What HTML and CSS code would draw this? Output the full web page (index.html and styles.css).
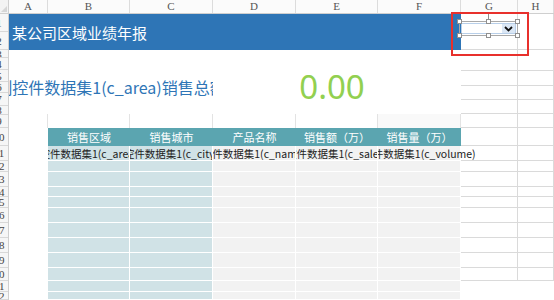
FILE: index.html
```html
<!DOCTYPE html>
<html lang="zh-CN">
<head>
    <meta charset="UTF-8">
    <meta name="viewport" content="width=device-width, initial-scale=1.0">
    <title>某公司区域业绩年报</title>
    <link rel="stylesheet" href="styles.css">
</head>
<body>
    <div class="sheet">
        <div class="colhead">
            <div class="corner"></div>
            <div class="col">A</div>
            <div class="col">B</div>
            <div class="col">C</div>
            <div class="col">D</div>
            <div class="col">E</div>
            <div class="col">F</div>
            <div class="col">G</div>
            <div class="col">H</div>
        </div>

        <div class="body">
            <div class="rowhead" id="rowhead"></div>

            <div class="grid" id="grid">
                <!-- 标题行 -->
                <div class="cell title">某公司区域业绩年报</div>
                <div class="cell"></div>
                <div class="cell"></div>

                <!-- 销售总额 -->
                <div class="cell label"><span>列控件数据集1(c_area)销售总额</span></div>
                <div class="cell total">0.00</div>
                <div class="cell"></div>
                <div class="cell"></div>
                <div class="cell"></div>
                <div class="cell"></div>
                <div class="cell"></div>
                <div class="cell"></div>
                <div class="cell"></div>
                <div class="cell"></div>

                <div class="cell gap"></div>
                <div class="cell gap"></div>
                <div class="cell gap"></div>
                <div class="cell gap"></div>
                <div class="cell gap"></div>
                <div class="cell gap shade"></div>
                <div class="cell"></div>
                <div class="cell"></div>

                <!-- 表头 -->
                <div class="cell blank"></div>
                <div class="cell th">销售区域</div>
                <div class="cell th">销售城市</div>
                <div class="cell th">产品名称</div>
                <div class="cell th">销售额（万）</div>
                <div class="cell th">销售量（万）</div>
                <div class="cell"></div>
                <div class="cell"></div>
            </div>
        </div>

        <!-- 下拉框控件 -->
        <div class="select-box"></div>
        <div class="combo">
            <span class="stem"></span>
            <span class="handle tl"></span>
            <span class="handle tm"></span>
            <span class="handle tr"></span>
            <span class="handle bl"></span>
            <span class="handle bm"></span>
            <span class="handle br"></span>
            <div class="combo-field">
                <div class="combo-btn">
                    <svg width="9" height="6" viewBox="0 0 9 6"><polyline points="1,1 4.5,4.5 8,1" fill="none" stroke="#111" stroke-width="1.8"/></svg>
                </div>
            </div>
        </div>
    </div>

    <script>
        const grid = document.getElementById('grid');
        const rowhead = document.getElementById('rowhead');

        // 数据行：每行的高度由 grid-template-rows 决定
        const fields = ['c_area', 'c_city', 'c_name', 'c_sales', 'c_volume'];
        const dataRows = 12;

        for (let r = 0; r < dataRows; r++) {
            grid.insertAdjacentHTML('beforeend', '<div class="cell blank"></div>');
            fields.forEach((f, i) => {
                let cls = i < 2 ? 'cell data blue' : 'cell data grey';
                let text = '';
                if (r === 0) {
                    text = '<span>控件数据集1(' + f + ')</span>';
                    if (i === 4) cls += ' spill';
                }
                grid.insertAdjacentHTML('beforeend', '<div class="' + cls + '">' + text + '</div>');
            });
            // G、H 两列
            let side = r >= 10 ? 'cell blank' : 'cell';
            if (r === 0) side += ' clear';
            grid.insertAdjacentHTML('beforeend', '<div class="' + side + '"></div><div class="' + side + '"></div>');
        }

        // 行号（只露出右边一小截）
        const heights = [18, 18, 8, 12, 12, 11, 13, 9, 13, 18, 15, 11, 15, 10, 11, 15, 15, 15, 15, 13, 11, 8];
        heights.forEach((h, i) => {
            rowhead.insertAdjacentHTML('beforeend',
                '<div class="rownum" style="height:' + h + 'px"><span>' + (i + 1) + '</span></div>');
        });
    </script>
</body>
</html>
```

FILE: styles.css
```css
* {
    box-sizing: border-box;
    margin: 0;
    padding: 0;
}

body {
    font-family: "Noto Sans CJK SC", "Noto Sans", sans-serif;
    background-color: #ffffff;
    width: 554px;
    height: 300px;
    overflow: hidden;
}

.sheet {
    position: relative;
    width: 554px;
    height: 300px;
}

/* 列标 */
.colhead {
    display: grid;
    grid-template-columns: 9px 39px 82px 83px 83px 82px 83px 57px 36px;
    height: 14px;
    border-bottom: 1px solid #cfcfcf;
    background: #fbfbfb;
}

.colhead .col {
    font-family: "Liberation Serif", serif;
    font-size: 11px;
    line-height: 13px;
    color: #555;
    text-align: center;
    border-right: 1px solid #dcdcdc;
}

.corner {
    position: relative;
    border-right: 1px solid #cfcfcf;
    background: #f3f3f3;
}

.corner::after {
    content: "";
    position: absolute;
    right: 1px;
    bottom: 1px;
    border-left: 6px solid transparent;
    border-bottom: 6px solid #d6d6d6;
}

.body {
    display: flex;
}

/* 行号 */
.rowhead {
    width: 9px;
    flex-shrink: 0;
    overflow: hidden;
    background: #f6f6f6;
    border-right: 1px solid #cfcfcf;
}

.rownum {
    border-bottom: 1px solid #d8d8d8;
    overflow: hidden;
    display: flex;
    align-items: center;
}

.rownum span {
    flex-shrink: 0;
    width: 26px;
    margin-left: -14px;
    text-align: center;
    font-family: "Liberation Serif", serif;
    font-size: 11px;
    color: #444;
}

/* 表格主体 */
.grid {
    display: grid;
    grid-template-columns: 39px 82px 83px 83px 82px 83px 57px 36px;
    grid-template-rows: 36px 21px 15px 14px 14px 14px 18px 15px 11px 15px 10px 11px 15px 15px 15px 15px 13px 11px 8px;
}

.cell {
    border-right: 1px solid #dadada;
    border-bottom: 1px solid #dadada;
    background: #ffffff;
    min-width: 0;
}

.cell.blank {
    border: none;
}

.cell.clear {
    background: none;
}

.title {
    grid-column: span 6;
    background: #2e75b6;
    border: none;
    color: #ffffff;
    font-size: 15px;
    display: flex;
    align-items: center;
    padding-left: 3px;
}

.label, .total {
    grid-column: span 3;
    grid-row: span 4;
    border: none;
    display: flex;
    justify-content: center;
    align-items: center;
    overflow: hidden;
    white-space: nowrap;
    padding-top: 10px;
}

.label {
    font-size: 16px;
    color: #2e75b6;
}

.label span {
    flex-shrink: 0;
}

.total {
    font-family: "Noto Sans", sans-serif;
    font-size: 33px;
    color: #92d050;
    padding-top: 8px;
    padding-right: 10px;
}

.gap {
    border-bottom: none;
    border-right-color: #e3e3e3;
}

.gap.shade {
    background: #f9f9f9;
}

.th {
    background: #5ba5b0;
    border: none;
    color: #ffffff;
    font-size: 11px;
    display: flex;
    align-items: center;
    justify-content: center;
}

.data {
    border-right: 1px solid #ffffff;
    border-bottom: 1px solid #ffffff;
    font-size: 10.5px;
    color: #222;
    display: flex;
    justify-content: center;
    align-items: center;
    overflow: hidden;
    white-space: nowrap;
}

.data span {
    flex-shrink: 0;
}

.data.blue {
    background: #d0e2e6;
}

.data.grey {
    background: #f2f2f2;
}

.data.spill {
    overflow: visible;
    clip-path: inset(0 -80px 0 0);
}

/* 红框与下拉框 */
.select-box {
    position: absolute;
    left: 451px;
    top: 12px;
    width: 78px;
    height: 44px;
    border: 2px solid #e8302c;
}

.combo {
    position: absolute;
    left: 459px;
    top: 21px;
    width: 59px;
    height: 15px;
    border: 1px solid #a9a9a9;
}

.combo-field {
    position: absolute;
    left: 1px;
    top: 1px;
    right: 1px;
    bottom: 1px;
    border: 1px solid #b8cfe9;
    background: #ffffff;
}

.combo-btn {
    position: absolute;
    right: 0;
    top: 0;
    bottom: 0;
    width: 13px;
    background: #dbe7f5;
    display: flex;
    align-items: center;
    justify-content: center;
}

.handle {
    position: absolute;
    width: 5px;
    height: 5px;
    background: #ffffff;
    border: 1px solid #8f8f8f;
    z-index: 2;
}

.handle.tl { left: -3px; top: -3px; }
.handle.tm { left: 26px; top: -3px; }
.handle.tr { right: -3px; top: -3px; }
.handle.bl { left: -3px; bottom: -3px; }
.handle.bm { left: 26px; bottom: -3px; }
.handle.br { right: -3px; bottom: -3px; }

.stem {
    position: absolute;
    left: 28px;
    top: -8px;
    width: 1px;
    height: 6px;
    background: #8f8f8f;
}
```
